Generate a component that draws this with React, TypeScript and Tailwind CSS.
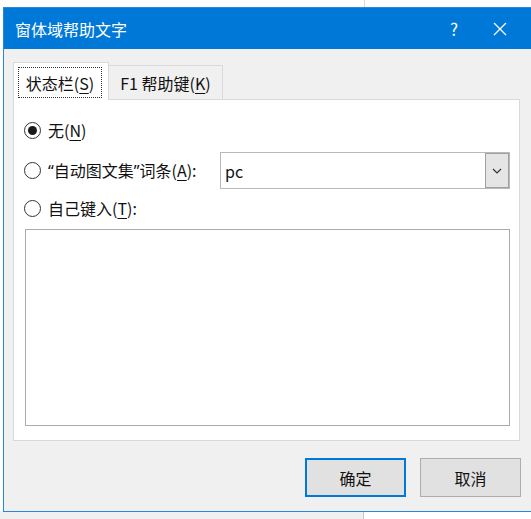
import React from "react";

function Radio({ checked }: { checked?: boolean }) {
  return (
    <span className="w-[17px] h-[17px] rounded-full border border-[#333333] bg-white flex items-center justify-center shrink-0">
      {checked && <span className="w-[9px] h-[9px] rounded-full bg-[#1a1a1a]" />}
    </span>
  );
}

function U({ children }: { children: React.ReactNode }) {
  return <span className="underline underline-offset-[3px] decoration-1">{children}</span>;
}

function Q({ children }: { children: React.ReactNode }) {
  return <span className="font-['Noto_Sans',sans-serif]">{children}</span>;
}

export default function App() {
  return (
    <div className="relative w-[531px] h-[519px] overflow-hidden bg-white font-['Noto_Sans_CJK_SC','Noto_Sans',sans-serif] text-[16px] text-[#111111]">
      {/* background window hints */}
      <div className="absolute left-[364px] top-0 w-px h-[7px] bg-[#d8d8d8]" />
      <div className="absolute left-0 bottom-0 w-[364px] h-[8px] bg-[#f0f0f0] border-r border-[#c8c8c8]" />

      {/* dialog */}
      <div className="absolute left-[3px] top-[7px] w-[545px] h-[505px] border border-[#2b88d8] bg-[#f0f0f0] flex flex-col">
        {/* title bar */}
        <div className="h-[41px] bg-[#0078d7] flex items-center text-white shrink-0 pr-[24px]">
          <span className="pl-[11px] leading-none">窗体域帮助文字</span>
          <div className="flex-1" />
          <div className="w-[46px] h-full flex items-center justify-center text-[17px]">?</div>
          <div className="w-[46px] h-full flex items-center justify-center">
            <svg width="14" height="14" viewBox="0 0 14 14">
              <path d="M1 1 L13 13 M13 1 L1 13" stroke="white" strokeWidth="1.3" />
            </svg>
          </div>
        </div>

        {/* body */}
        <div className="pl-[9px] pt-[13px] flex flex-col">
          {/* tabs */}
          <div className="flex items-end h-[38px] -mb-px relative z-10">
            <div className="w-[96px] h-[38px] bg-white border-t border-l border-r border-[#d9d9d9] pt-[4px] pl-[4px]">
              <div className="w-[84px] h-[31px] border border-dotted border-[#333333] flex items-center justify-center">
                状态栏(<U>S</U>)
              </div>
            </div>
            <div className="w-[114px] h-[34px] mb-px bg-[#f0f0f0] border-t border-r border-[#d9d9d9] flex items-center justify-center">
              F1 帮助键(<U>K</U>)
            </div>
          </div>

          {/* panel */}
          <div className="w-[507px] h-[342px] bg-white border border-[#d9d9d9] pl-[10px] pr-[9px] pt-[20px] flex flex-col">
            <div className="h-[20px] flex items-center gap-[7px]">
              <Radio checked />
              <span>无(<U>N</U>)</span>
            </div>
            <div className="mt-[12px] h-[37px] flex items-center">
              <Radio />
              <span className="ml-[7px]">
                <Q>“</Q>自动图文集<Q>”</Q>词条(<U>A</U>):
              </span>
              <div className="ml-auto w-[290px] h-[37px] border border-[#b9b9b9] bg-white flex items-stretch">
                <div className="flex-1 flex items-center pl-[4px]">pc</div>
                <div className="w-[24px] bg-[#e5e5e5] border border-[#a0a0a0] flex items-center justify-center">
                  <svg width="10" height="6" viewBox="0 0 10 6">
                    <path d="M1 1 L5 5 L9 1" stroke="#333333" strokeWidth="1.2" fill="none" />
                  </svg>
                </div>
              </div>
            </div>
            <div className="mt-[9px] h-[20px] flex items-center gap-[7px]">
              <Radio />
              <span>自己键入(<U>T</U>):</span>
            </div>
            <div className="mt-[11px] ml-[1px] h-[197px] border border-[#ababab] bg-white" />
          </div>

          {/* buttons */}
          <div className="mt-[17px] ml-[292px] flex gap-[14px]">
            <div className="w-[101px] h-[39px] border-2 border-[#0078d7] bg-[#e1e1e1] flex items-center justify-center">
              确定
            </div>
            <div className="w-[101px] h-[39px] border border-[#adadad] bg-[#e1e1e1] flex items-center justify-center">
              取消
            </div>
          </div>
        </div>
      </div>
    </div>
  );
}
